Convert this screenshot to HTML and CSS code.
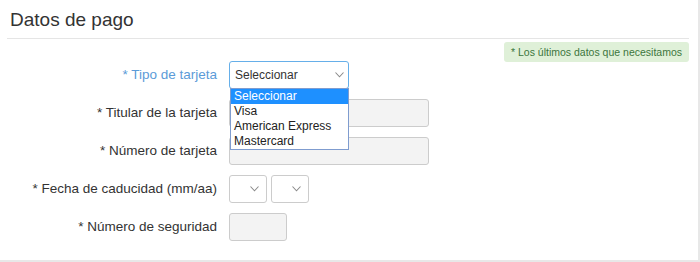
FILE: index.html
```html
<!DOCTYPE html>
<html lang="es">
<head>
<meta charset="utf-8">
<title>Datos de pago</title>
<link rel="stylesheet" href="styles.css">
</head>
<body>
<div class="panel">
  <div class="panel-head"><h2 class="title">Datos de pago</h2></div>
  <div class="note-row"><span class="note">* Los últimos datos que necesitamos</span></div>
  <form class="form">
    <div class="row">
      <label class="lbl lbl-focus">* Tipo de tarjeta</label>
      <div class="ctrl">
        <div class="select select-wide focused">
          <span class="sel-text">Seleccionar</span>
          <svg class="chev" width="9" height="6" viewBox="0 0 9 6"><polyline points="0.5,0.5 4.5,4.8 8.5,0.5" fill="none" stroke="#8a8a8a" stroke-width="1.1"/></svg>
        </div>
        <ul class="dropdown">
          <li class="opt opt-sel">Seleccionar</li>
          <li class="opt">Visa</li>
          <li class="opt">American Express</li>
          <li class="opt">Mastercard</li>
        </ul>
      </div>
    </div>
    <div class="row">
      <label class="lbl">* Titular de la tarjeta</label>
      <div class="ctrl"><div class="input input-wide"></div></div>
    </div>
    <div class="row">
      <label class="lbl">* Número de tarjeta</label>
      <div class="ctrl"><div class="input input-wide"></div></div>
    </div>
    <div class="row">
      <label class="lbl">* Fecha de caducidad (mm/aa)</label>
      <div class="ctrl">
        <div class="select select-small">
          <svg class="chev" width="9" height="6" viewBox="0 0 9 6"><polyline points="0.5,0.5 4.5,4.8 8.5,0.5" fill="none" stroke="#8a8a8a" stroke-width="1.1"/></svg>
        </div>
        <div class="select select-small">
          <svg class="chev" width="9" height="6" viewBox="0 0 9 6"><polyline points="0.5,0.5 4.5,4.8 8.5,0.5" fill="none" stroke="#8a8a8a" stroke-width="1.1"/></svg>
        </div>
      </div>
    </div>
    <div class="row">
      <label class="lbl">* Número de seguridad</label>
      <div class="ctrl"><div class="input input-cvv"></div></div>
    </div>
  </form>
</div>
</body>
</html>
```

FILE: styles.css
```css
html, body {
  margin: 0;
  padding: 0;
}
body {
  background: #e8e8e8;
  font-family: "Liberation Sans", Arial, sans-serif;
  width: 700px;
  height: 262px;
  overflow: hidden;
}
.panel {
  width: 698px;
  height: 260px;
  box-sizing: border-box;
  background: #fff;
  padding: 0 9px 0 7px;
}
.panel-head {
  padding: 9px 0 7px 3px;
  border-bottom: 1px solid #e5e5e5;
}
.title {
  margin: 0;
  font-size: 19px;
  line-height: 22px;
  font-weight: normal;
  color: #333;
}
.note-row {
  display: flex;
  justify-content: flex-end;
  margin-top: 3px;
  height: 19px;
}
.note {
  display: block;
  background: #dff0d8;
  color: #3c763d;
  font-size: 10.5px;
  line-height: 20px;
  height: 20px;
  padding: 0 7px;
  border-radius: 3px;
}
.form {
  display: flex;
  flex-direction: column;
  gap: 10px;
  margin: 0;
}
.row {
  display: grid;
  grid-template-columns: 210px auto;
  column-gap: 12px;
  align-items: center;
  height: 28px;
}
.lbl {
  text-align: right;
  font-size: 13.5px;
  line-height: 28px;
  color: #333;
}
.lbl-focus {
  color: #5b9bd8;
}
.ctrl {
  position: relative;
  display: flex;
  gap: 4px;
}
.select {
  box-sizing: border-box;
  height: 28px;
  border: 1px solid #ccc;
  border-radius: 3px;
  background: #fff;
  display: flex;
  align-items: center;
  justify-content: space-between;
}
.select-wide {
  width: 120px;
  padding: 0 4px 0 5px;
}
.focused {
  border-color: #66afe9;
}
.sel-text {
  font-size: 12px;
  color: #333;
}
.select-small {
  width: 38px;
  justify-content: flex-end;
  padding-right: 7px;
}
.chev {
  display: block;
}
.input {
  box-sizing: border-box;
  height: 28px;
  border: 1px solid #ccc;
  border-radius: 3px;
  background: #f3f3f3;
}
.input-wide {
  width: 200px;
}
.input-cvv {
  width: 58px;
}
.dropdown {
  position: absolute;
  top: 27px;
  left: 1px;
  z-index: 5;
  width: 119px;
  box-sizing: border-box;
  margin: 0;
  padding: 0;
  list-style: none;
  background: #fff;
  border: 1px solid #7f9ccf;
}
.opt {
  font-size: 12px;
  line-height: 15px;
  height: 15px;
  padding-left: 3px;
  color: #222;
}
.opt-sel {
  background: #1e90ff;
  color: #fff;
}
```
